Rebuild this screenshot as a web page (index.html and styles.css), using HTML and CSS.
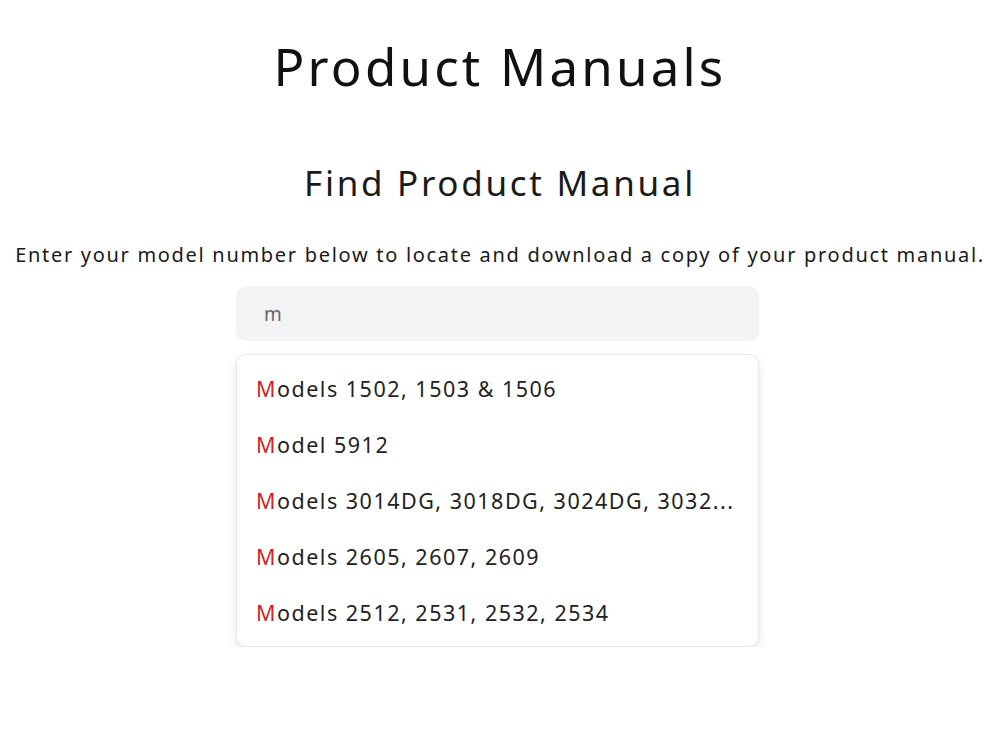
FILE: index.html
```html
<!DOCTYPE html>
<html lang="en">
<head>
  <meta charset="UTF-8">
  <title>Product Manuals</title>
  <link rel="stylesheet" href="styles.css">
</head>
<body>
  <div class="page">
    <h1>Product Manuals</h1>
    <h2>Find Product Manual</h2>
    <p class="intro">Enter your model number below to locate and download a copy of your product manual.</p>

    <div class="search">
      <input type="text" class="search-input" value="m">
      <ul class="suggestions">
        <li><span class="hit">M</span>odels 1502, 1503 &amp; 1506</li>
        <li><span class="hit">M</span>odel 5912</li>
        <li><span class="hit">M</span>odels 3014DG, 3018DG, 3024DG, 3032...</li>
        <li><span class="hit">M</span>odels 2605, 2607, 2609</li>
        <li><span class="hit">M</span>odels 2512, 2531, 2532, 2534</li>
      </ul>
    </div>
  </div>
</body>
</html>
```

FILE: styles.css
```css
body {
  margin: 0;
  background: #fff;
  font-family: "Noto Sans", Arial, sans-serif;
  color: #1a1a1a;
}

.page {
  display: flex;
  flex-direction: column;
  align-items: center;
  padding-top: 30px;
}

h1 {
  margin: 0;
  font-size: 51px;
  font-weight: 400;
  letter-spacing: 3.2px;
  color: #111;
  line-height: 72px;
}

h2 {
  margin: 56px 0 0;
  font-size: 35px;
  font-weight: 400;
  letter-spacing: 2.7px;
  line-height: 50px;
}

.intro {
  margin: 33px 0 0;
  font-size: 20px;
  letter-spacing: 1.7px;
  line-height: 28px;
}

.search {
  width: 523px;
  margin: 17px 5px 0 0;
}

.search-input {
  display: block;
  width: 100%;
  height: 55px;
  box-sizing: border-box;
  border: none;
  border-radius: 10px;
  background: #f2f3f5;
  padding: 0 28px;
  font-family: inherit;
  font-size: 19px;
  letter-spacing: 1px;
  color: #666;
  outline: none;
}

.suggestions {
  list-style: none;
  margin: 13px 0 0;
  padding: 6px 0 5px;
  border: 1px solid #e8e8ea;
  border-radius: 10px;
  box-shadow: 0 4px 10px rgba(0, 0, 0, 0.1);
  background: #fff;
}

.suggestions li {
  padding: 0 19px;
  height: 56px;
  line-height: 56px;
  font-size: 21.5px;
  letter-spacing: 1.5px;
  white-space: nowrap;
  color: #222;
  cursor: pointer;
}

.hit {
  color: #d2232a;
}
```
